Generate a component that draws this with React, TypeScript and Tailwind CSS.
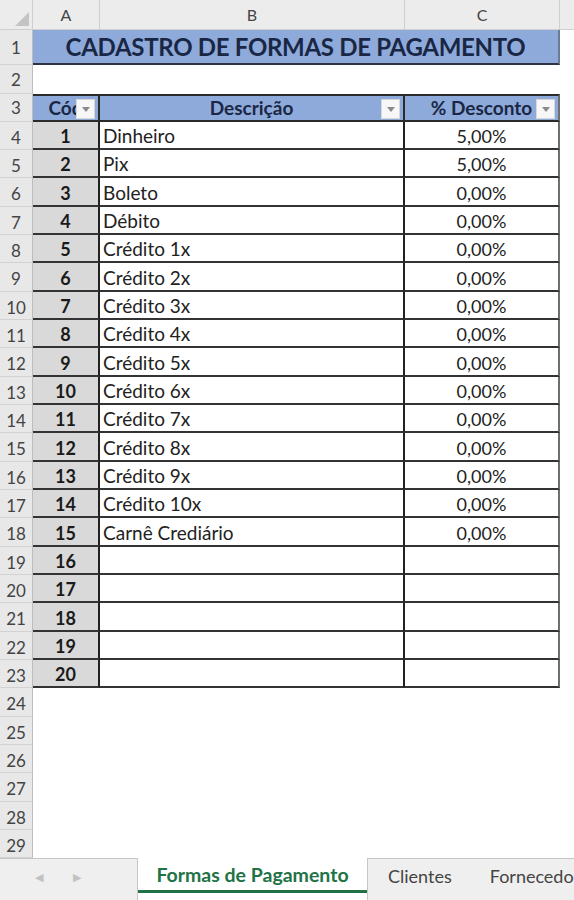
import React from "react";

const rowsData: [string, string, string][] = [
  ["1", "Dinheiro", "5,00%"],
  ["2", "Pix", "5,00%"],
  ["3", "Boleto", "0,00%"],
  ["4", "Débito", "0,00%"],
  ["5", "Crédito 1x", "0,00%"],
  ["6", "Crédito 2x", "0,00%"],
  ["7", "Crédito 3x", "0,00%"],
  ["8", "Crédito 4x", "0,00%"],
  ["9", "Crédito 5x", "0,00%"],
  ["10", "Crédito 6x", "0,00%"],
  ["11", "Crédito 7x", "0,00%"],
  ["12", "Crédito 8x", "0,00%"],
  ["13", "Crédito 9x", "0,00%"],
  ["14", "Crédito 10x", "0,00%"],
  ["15", "Carnê Crediário", "0,00%"],
  ["16", "", ""],
  ["17", "", ""],
  ["18", "", ""],
  ["19", "", ""],
  ["20", "", ""],
];

function RowHead({ n, low }: { n: number; low?: boolean }) {
  return (
    <div
      className={`w-[33px] shrink-0 h-full bg-[#e8e8e8] border-b border-r border-b-[#d2d2d2] border-r-[#bdbdbd] flex items-center justify-center text-[17px] text-[#444] ${
        low ? "pt-[4px]" : "pt-[1px]"
      }`}
    >
      {n}
    </div>
  );
}

function Drop() {
  return (
    <div className="absolute right-[3px] top-[3px] w-[19px] h-[20px] bg-[#f7f7f7] border border-[#d8d8d8] flex items-center justify-center">
      <svg width="8" height="5" viewBox="0 0 8 5">
        <path d="M0 0 L8 0 L4 5 Z" fill="#8a8a8a" />
      </svg>
    </div>
  );
}

export default function App() {
  const rowH = (i: number) => (i % 3 === 2 ? "h-[29px]" : "h-[28px]");
  return (
    <div className="w-[574px] h-[900px] bg-white overflow-hidden flex flex-col font-['Lato','Noto_Sans',sans-serif] text-[#222]">
      {/* column headers */}
      <div className="flex h-[30px] shrink-0 bg-[#ececec] text-[16px] text-[#444]">
        <div className="w-[33px] shrink-0 border-r border-b border-[#cfcfcf] relative">
          <svg className="absolute right-[3px] bottom-[3px]" width="14" height="14" viewBox="0 0 14 14">
            <path d="M14 0 L14 14 L0 14 Z" fill="#c4c4c4" />
          </svg>
        </div>
        <div className="w-[67px] shrink-0 border-r border-b border-[#cfcfcf] flex items-center justify-center">A</div>
        <div className="w-[305px] shrink-0 border-r border-b border-[#cfcfcf] flex items-center justify-center">B</div>
        <div className="w-[155px] shrink-0 border-r border-b border-[#cfcfcf] flex items-center justify-center">C</div>
        <div className="flex-1 border-b border-[#cfcfcf]" />
      </div>

      {/* row 1 title */}
      <div className="flex h-[35px] shrink-0">
        <RowHead n={1} />
        <div className="w-[527px] shrink-0 bg-[#8eaadb] border-b-2 border-r-2 border-b-[#2e3440] border-r-[#6b7a95] flex items-center justify-center pt-[1px] font-bold text-[24px] text-[#1a2744] tracking-[-0.3px]">
          CADASTRO DE FORMAS DE PAGAMENTO
        </div>
        <div className="flex-1" />
      </div>

      {/* row 2 */}
      <div className="flex h-[29px] shrink-0">
        <RowHead n={2} />
        <div className="flex-1" />
      </div>

      {/* row 3 header */}
      <div className="flex h-[28px] shrink-0">
        <RowHead n={3} />
        <div className="w-[67px] shrink-0 bg-[#8eaadb] border-t-2 border-b-2 border-r-2 border-[#2b2b2b] relative flex items-center justify-center pt-[1px] font-bold text-[19px] text-[#1a2744] overflow-hidden">
          Cód
          <Drop />
        </div>
        <div className="w-[305px] shrink-0 bg-[#8eaadb] border-t-2 border-b-2 border-r-2 border-[#2b2b2b] relative flex items-center justify-center pt-[1px] font-bold text-[19px] text-[#1a2744]">
          Descrição
          <Drop />
        </div>
        <div className="w-[155px] shrink-0 bg-[#8eaadb] border-t-2 border-b-2 border-r-2 border-t-[#2b2b2b] border-b-[#2b2b2b] border-r-[#6f6f6f] relative flex items-center justify-center pt-[1px] font-bold text-[19px] text-[#1a2744]">
          % Desconto
          <Drop />
        </div>
        <div className="flex-1" />
      </div>

      {/* data rows */}
      {rowsData.map((r, i) => (
        <div key={i} className={`flex shrink-0 ${rowH(i)}`}>
          <RowHead n={i + 4} low />
          <div className="w-[67px] shrink-0 bg-[#d9d9d9] border-b-2 border-r-2 border-b-[#333] border-r-[#222] flex items-center justify-center pt-[3px] font-bold text-[18px] text-[#1a1a1a]">
            {r[0]}
          </div>
          <div className="w-[305px] shrink-0 border-b-2 border-r-2 border-b-[#333] border-r-[#222] flex items-center pl-[3px] pt-[3px] text-[19px] text-[#222]">
            {r[1]}
          </div>
          <div className="w-[155px] shrink-0 border-b-2 border-r-2 border-b-[#333] border-r-[#6f6f6f] flex items-center justify-center pt-[3px] text-[18px] text-[#222]">
            {r[2]}
          </div>
          <div className="flex-1" />
        </div>
      ))}

      {/* empty rows 24-29 */}
      {[24, 25, 26, 27, 28, 29].map((n, j) => (
        <div key={n} className={`flex shrink-0 ${rowH(j + 20)}`}>
          <RowHead n={n} low />
          <div className="flex-1" />
        </div>
      ))}

      {/* sheet tabs */}
      <div className="flex flex-1 bg-[#efefef] text-[18px]">
        <div className="w-[138px] shrink-0 border-t border-r border-[#c6c6c6] flex items-center gap-[30px] pl-[35px] pb-[4px] text-[#c2c2c2] text-[11px]">
          <span>◀</span>
          <span>▶</span>
        </div>
        <div className="w-[230px] shrink-0 bg-white border-r border-[#c6c6c6] flex flex-col">
          <div className="flex-1 flex items-center justify-center font-bold text-[19.5px] text-[#217346] pt-[2px]">
            Formas de Pagamento
          </div>
          <div className="h-[3px] bg-[#217346] mb-[7px]" />
        </div>
        <div className="flex-1 border-t border-[#c6c6c6] flex items-center text-[#444] whitespace-nowrap overflow-hidden pb-[6px]">
          <span className="px-[20px]">Clientes</span>
          <span className="w-px h-[26px] bg-[#c6c6c6]" />
          <span className="pl-[18px]">Fornecedores</span>
        </div>
      </div>
    </div>
  );
}
